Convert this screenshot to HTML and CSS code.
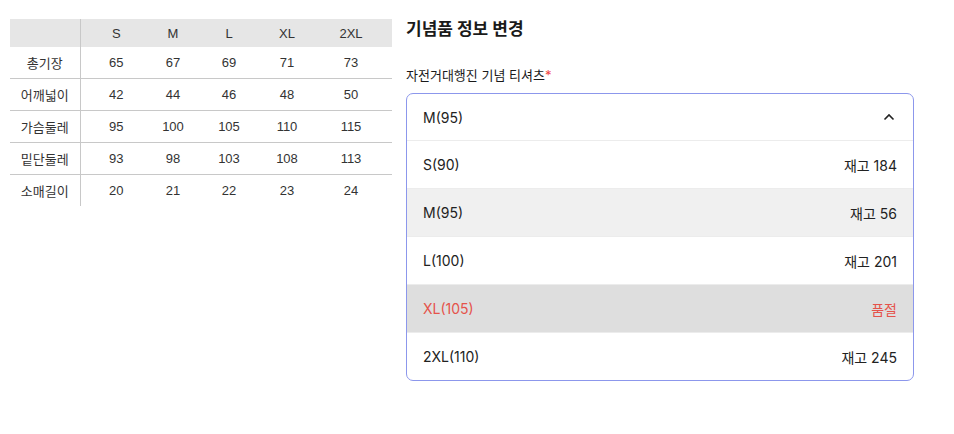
FILE: index.html
```html
<!DOCTYPE html>
<html lang="ko">
<head>
    <meta charset="UTF-8">
    <meta name="viewport" content="width=device-width, initial-scale=1.0">
    <title>기념품 정보 변경</title>
    <link rel="stylesheet" href="styles.css">
</head>
<body>
    <div class="page">
        <!-- Size chart -->
        <table class="size-table">
            <colgroup>
                <col style="width: 70px">
                <col style="width: 72px">
                <col style="width: 42px">
                <col style="width: 70px">
                <col style="width: 46px">
                <col style="width: 82px">
            </colgroup>
            <thead>
                <tr>
                    <th></th>
                    <th>S</th>
                    <th>M</th>
                    <th>L</th>
                    <th>XL</th>
                    <th>2XL</th>
                </tr>
            </thead>
            <tbody>
                <tr><td>총기장</td><td>65</td><td>67</td><td>69</td><td>71</td><td>73</td></tr>
                <tr><td>어깨넓이</td><td>42</td><td>44</td><td>46</td><td>48</td><td>50</td></tr>
                <tr><td>가슴둘레</td><td>95</td><td>100</td><td>105</td><td>110</td><td>115</td></tr>
                <tr><td>밑단둘레</td><td>93</td><td>98</td><td>103</td><td>108</td><td>113</td></tr>
                <tr><td>소매길이</td><td>20</td><td>21</td><td>22</td><td>23</td><td>24</td></tr>
            </tbody>
        </table>

        <!-- Edit form -->
        <div class="edit-form">
            <h2 class="form-title">기념품 정보 변경</h2>
            <label class="field-label">자전거대행진 기념 티셔츠<span class="required">*</span></label>

            <div class="dropdown">
                <div class="dropdown-head">
                    <span>M(95)</span>
                    <svg class="chevron" width="12" height="8" viewBox="0 0 12 8">
                        <path d="M1.5 6.5 L6 2 L10.5 6.5" fill="none" stroke="#222" stroke-width="1.6"/>
                    </svg>
                </div>
                <ul class="options">
                    <li class="option"><span>S(90)</span><span>재고 184</span></li>
                    <li class="option selected"><span>M(95)</span><span>재고 56</span></li>
                    <li class="option"><span>L(100)</span><span>재고 201</span></li>
                    <li class="option soldout"><span>XL(105)</span><span>품절</span></li>
                    <li class="option"><span>2XL(110)</span><span>재고 245</span></li>
                </ul>
            </div>
        </div>
    </div>
</body>
</html>
```

FILE: styles.css
```css
body {
    margin: 0;
    font-family: Inter, "Noto Sans CJK KR", sans-serif;
    color: #222;
    background: #fff;
}

.page {
    display: flex;
    align-items: flex-start;
    gap: 14px;
    padding: 19px 0 0 10px;
}

/* Size chart */
.size-table {
    width: 382px;
    border-collapse: collapse;
    table-layout: fixed;
    font-family: "Liberation Sans", "Noto Sans CJK KR", sans-serif;
    font-size: 13px;
    color: #333;
}

.size-table th {
    background-color: #e6e6e6;
    font-weight: normal;
    height: 28px;
    padding: 0;
    text-align: center;
}

.size-table td {
    height: 31px;
    padding: 0;
    text-align: center;
    border-bottom: 1px solid #c8c8c8;
}

.size-table tr:last-child td {
    border-bottom: none;
}

.size-table th:first-child,
.size-table td:first-child {
    border-right: 1px solid #c8c8c8;
}

/* Form */
.edit-form {
    width: 508px;
}

.form-title {
    margin: 0;
    font-size: 17px;
    font-weight: 700;
    line-height: 20px;
    color: #1a1a1a;
}

.field-label {
    display: block;
    margin-top: 27px;
    font-size: 13px;
    line-height: 18px;
    color: #1a1a1a;
}

.required {
    color: #f04646;
}

.dropdown {
    margin-top: 9px;
    border: 1px solid #8c97ec;
    border-radius: 7px;
    overflow: hidden;
}

.dropdown-head {
    display: flex;
    justify-content: space-between;
    align-items: center;
    height: 46px;
    padding: 0 18px 0 16px;
    font-size: 14px;
    border-bottom: 1px solid #ececec;
}

.options {
    list-style: none;
    margin: 0;
    padding: 0;
}

.option {
    display: flex;
    justify-content: space-between;
    align-items: center;
    height: 47px;
    padding: 0 16px;
    font-size: 14px;
    border-bottom: 1px solid #ececec;
}

.option:last-child {
    border-bottom: none;
}

.option.selected {
    background-color: #f0f0f0;
}

.option.soldout {
    background-color: #dedede;
    color: #e5534b;
}
```
